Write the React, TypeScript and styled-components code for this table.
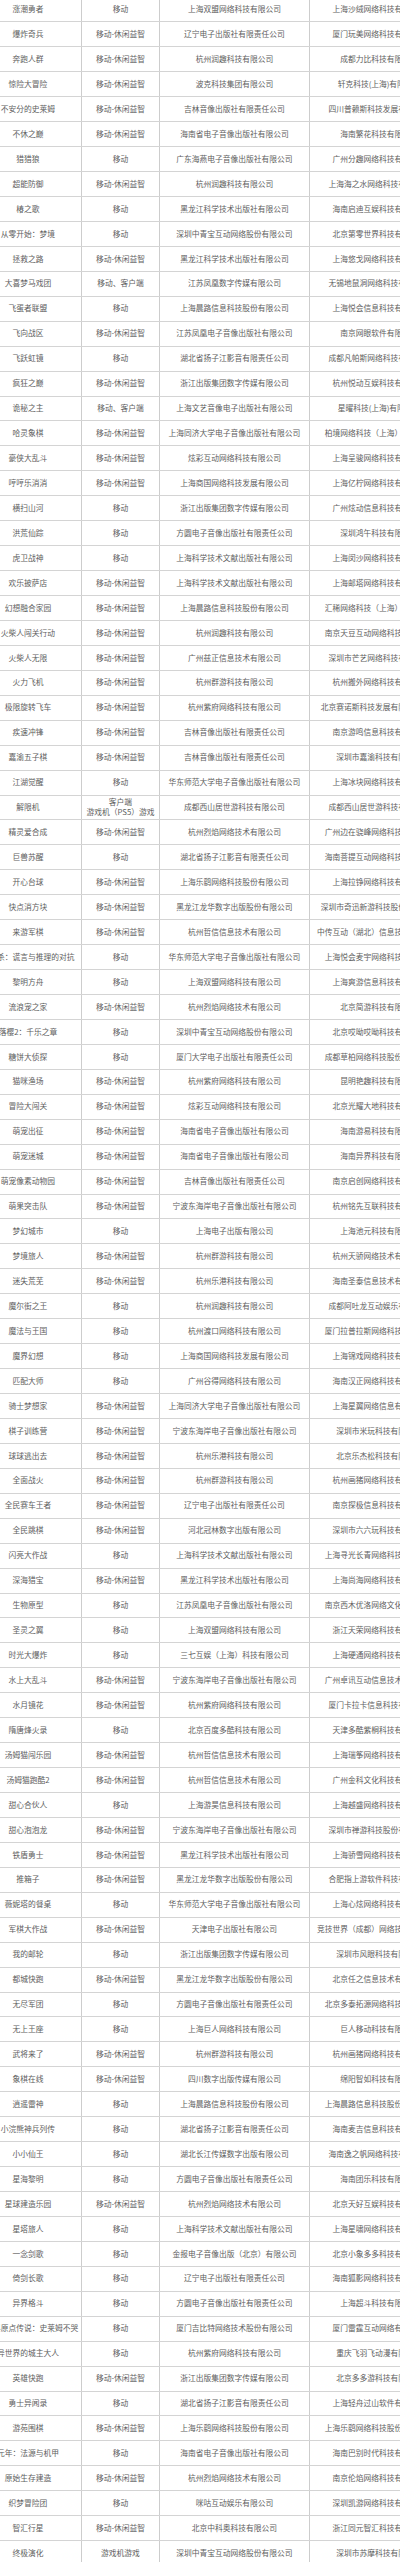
import React from "react";
import styled, { createGlobalStyle } from "styled-components";

const GlobalStyle = createGlobalStyle`
  html, body {
    margin: 0;
    padding: 0;
    background: #ffffff;
    overflow: hidden;
  }
  body {
    font-family: "Noto Sans CJK SC", "Noto Sans", sans-serif;
  }
`;

const Table = styled.div`
  margin: -2.5px 0 0 -25px;
  width: 473px;
  display: flex;
  flex-direction: column;
`;

const Row = styled.div`
  display: grid;
  grid-template-columns: 107px 78px 150px 138px;
  height: 24.95px;
  box-sizing: border-box;
  border-bottom: 1px solid #d4d4d4;
`;

const Cell = styled.div<{ $last?: boolean }>`
  display: flex;
  align-items: center;
  justify-content: center;
  text-align: center;
  box-sizing: border-box;
  border-right: ${(p) => (p.$last ? "none" : "1px solid #cdcdcd")};
  font-size: 7.75px;
  line-height: 1.38;
  color: #5e5e5e;
  white-space: pre;
  overflow: visible;
`;

type Entry = [string, string, string, string];

const data: Entry[] = [
  ["涨潮勇者", "移动", "上海双盟网络科技有限公司", "上海沙绒网络科技有限公司"],
  ["爆炸奇兵", "移动-休闲益智", "辽宁电子出版社有限责任公司", "厦门玩美网络科技有限公司"],
  ["奔跑人群", "移动-休闲益智", "杭州润趣科技有限公司", "成都力比科技有限公司"],
  ["惊险大冒险", "移动-休闲益智", "波克科技集团有限公司", "轩克科技(上海)有限公司"],
  ["不安分的史莱姆", "移动-休闲益智", "吉林音像出版社有限责任公司", "四川普赖斯科技发展有限公司"],
  ["不休之巅", "移动-休闲益智", "海南省电子音像出版社有限公司", "海南繁花科技有限公司"],
  ["猎猎狼", "移动", "广东海燕电子音像出版社有限公司", "广州分趣网络科技有限公司"],
  ["超能防御", "移动-休闲益智", "杭州润趣科技有限公司", "上海海之水网络科技有限公司"],
  ["椿之歌", "移动", "黑龙江科学技术出版社有限公司", "海南启迪互娱科技有限公司"],
  ["从零开始：梦境", "移动", "深圳中青宝互动网络股份有限公司", "北京第零世界科技有限公司"],
  ["拯救之路", "移动-休闲益智", "黑龙江科学技术出版社有限公司", "上海悠戈网络科技有限公司"],
  ["大喜梦马戏团", "移动、客户端", "江苏凤凰数字传媒有限公司", "无锡地鼠洞网络科技有限公司"],
  ["飞蛋者联盟", "移动", "上海晨路信息科技股份有限公司", "上海悦会信息科技有限公司"],
  ["飞向战区", "移动-休闲益智", "江苏凤凰电子音像出版社有限公司", "南京网眼软件有限公司"],
  ["飞跃虹镜", "移动", "湖北省扬子江影音有限责任公司", "成都凡帕斯网络科技有限公司"],
  ["疯狂之巅", "移动-休闲益智", "浙江出版集团数字传媒有限公司", "杭州悦动互娱科技有限公司"],
  ["诡秘之主", "移动、客户端", "上海文艺音像电子出版社有限公司", "星曜科技(上海)有限公司"],
  ["哈灵象棋", "移动-休闲益智", "上海同济大学电子音像出版社有限公司", "柏境网络科技（上海）有限公司"],
  ["豪侠大乱斗", "移动-休闲益智", "炫彩互动网络科技有限公司", "上海呈骏网络科技有限公司"],
  ["哼哼乐消消", "移动-休闲益智", "上海商国网络科技发展有限公司", "上海亿柠网络科技有限公司"],
  ["横扫山河", "移动", "浙江出版集团数字传媒有限公司", "广州炫动信息科技有限公司"],
  ["洪荒仙踪", "移动", "方圆电子音像出版社有限责任公司", "深圳鸿午科技有限公司"],
  ["虎卫战神", "移动", "上海科学技术文献出版社有限公司", "上海闵沙网络科技有限公司"],
  ["欢乐披萨店", "移动-休闲益智", "上海科学技术文献出版社有限公司", "上海邮塔网络科技有限公司"],
  ["幻想融合家园", "移动-休闲益智", "上海晨路信息科技股份有限公司", "汇稀网络科技（上海）有限公司"],
  ["火柴人闯关行动", "移动-休闲益智", "杭州润趣科技有限公司", "南京天豆互动网络科技有限公司"],
  ["火柴人无限", "移动-休闲益智", "广州兹正信息技术有限公司", "深圳市芒艺网络科技有限公司"],
  ["火力飞机", "移动-休闲益智", "杭州群游科技有限公司", "杭州搬外网络科技有限公司"],
  ["极限旋转飞车", "移动-休闲益智", "杭州紫府网络科技有限公司", "北京赛诺斯科技发展有限责任公司"],
  ["疾速冲锋", "移动-休闲益智", "吉林音像出版社有限责任公司", "南京游鸣信息科技有限公司"],
  ["嘉渝五子棋", "移动-休闲益智", "吉林音像出版社有限责任公司", "深圳市嘉渝科技有限公司"],
  ["江湖觉醒", "移动", "华东师范大学电子音像出版社有限公司", "上海冰块网络科技有限公司"],
  ["解限机", "客户端\n游戏机（PS5）游戏", "成都西山居世游科技有限公司", "成都西山居世游科技有限公司"],
  ["精灵爱合成", "移动-休闲益智", "杭州烈焰网络技术有限公司", "广州边在骁峰网络科技有限公司"],
  ["巨兽苏醒", "移动", "湖北省扬子江影音有限责任公司", "海南菩提互动网络科技有限公司"],
  ["开心台球", "移动-休闲益智", "上海乐鹞网络科技股份有限公司", "上海拉铮网络科技有限公司"],
  ["快点消方块", "移动-休闲益智", "黑龙江龙华数字出版股份有限公司", "深圳市奇迅新游科技股份有限公司"],
  ["来游军棋", "移动-休闲益智", "杭州哲信信息技术有限公司", "中传互动（湖北）信息技术有限公司"],
  ["狼人杀：谎言与推理的对抗", "移动", "华东师范大学电子音像出版社有限公司", "上海悦会麦宇网络科技有限公司"],
  ["黎明方舟", "移动", "上海双盟网络科技有限公司", "上海爽游信息科技有限公司"],
  ["流浪宠之家", "移动-休闲益智", "杭州烈焰网络技术有限公司", "北京简游科技有限公司"],
  ["落樱2：千乐之章", "移动", "深圳中青宝互动网络股份有限公司", "北京哎呦哎呦科技有限公司"],
  ["糖饼大侦探", "移动", "厦门大学电子出版社有限责任公司", "成都草柏网络科技股份有限公司"],
  ["猫咪渔场", "移动-休闲益智", "杭州紫府网络科技有限公司", "昆明艳趣科技有限公司"],
  ["冒险大闯关", "移动-休闲益智", "炫彩互动网络科技有限公司", "北京光耀大地科技有限公司"],
  ["萌宠出征", "移动-休闲益智", "海南省电子音像出版社有限公司", "海南游易科技有限公司"],
  ["萌宠迷城", "移动-休闲益智", "海南省电子音像出版社有限公司", "海南异界科技有限公司"],
  ["萌宠像素动物园", "移动-休闲益智", "吉林音像出版社有限责任公司", "南京启创网络科技有限公司"],
  ["萌果突击队", "移动-休闲益智", "宁波东海岸电子音像出版社有限公司", "杭州铭先互联科技有限公司"],
  ["梦幻城市", "移动", "上海电子出版有限公司", "上海池元科技有限公司"],
  ["梦境旅人", "移动-休闲益智", "杭州群游科技有限公司", "杭州天骄网络技术有限公司"],
  ["迷失荒芜", "移动-休闲益智", "杭州乐港科技有限公司", "海南圣泰信息技术有限公司"],
  ["魔尔街之王", "移动", "杭州润趣科技有限公司", "成都阿吐龙互动娱乐有限公司"],
  ["魔法与王国", "移动", "杭州渡口网络科技有限公司", "厦门拉普拉斯网络科技有限公司"],
  ["魔界幻想", "移动", "上海商国网络科技发展有限公司", "上海锦戏网络科技有限公司"],
  ["匹配大师", "移动", "广州谷得网络科技有限公司", "海南汉正网络科技有限公司"],
  ["骑士梦想家", "移动-休闲益智", "上海同济大学电子音像出版社有限公司", "上海星翼网络信息有限公司"],
  ["棋子训练营", "移动-休闲益智", "宁波东海岸电子音像出版社有限公司", "深圳市米玩科技有限公司"],
  ["球球逃出去", "移动-休闲益智", "杭州乐港科技有限公司", "北京乐杰松科技有限公司"],
  ["全面战火", "移动-休闲益智", "杭州群游科技有限公司", "杭州画猪网络科技有限公司"],
  ["全民赛车王者", "移动-休闲益智", "辽宁电子出版社有限责任公司", "南京探极信息科技有限公司"],
  ["全民跳棋", "移动-休闲益智", "河北冠林数字出版有限公司", "深圳市六六玩科技有限公司"],
  ["闪亮大作战", "移动", "上海科学技术文献出版社有限公司", "上海寻光长青网络科技有限公司"],
  ["深海猎宝", "移动-休闲益智", "黑龙江科学技术出版社有限公司", "上海尚海网络科技有限公司"],
  ["生物原型", "移动", "江苏凤凰电子音像出版社有限公司", "南京西木优洛网络文化有限公司"],
  ["圣灵之翼", "移动", "上海双盟网络科技有限公司", "浙江天荣网络科技有限公司"],
  ["时光大爆炸", "移动", "三七互娱（上海）科技有限公司", "上海硬通网络科技有限公司"],
  ["水上大乱斗", "移动-休闲益智", "宁波东海岸电子音像出版社有限公司", "广州卓讯互动信息技术有限公司"],
  ["水月镜花", "移动-休闲益智", "杭州紫府网络科技有限公司", "厦门卡拉卡信息科技有限公司"],
  ["隋唐烽火录", "移动", "北京百度多酷科技有限公司", "天津多酷紫桐科技有限公司"],
  ["汤姆猫闯乐园", "移动-休闲益智", "杭州哲信信息技术有限公司", "上海瑞筝网络科技有限公司"],
  ["汤姆猫跑酷2", "移动-休闲益智", "杭州哲信信息技术有限公司", "广州金科文化科技有限公司"],
  ["甜心合伙人", "移动", "上海游昊信息科技有限公司", "上海越盛网络科技有限公司"],
  ["甜心泡泡龙", "移动-休闲益智", "宁波东海岸电子音像出版社有限公司", "深圳市禅游科技股份有限公司"],
  ["铁盾勇士", "移动-休闲益智", "黑龙江科学技术出版社有限公司", "上海骄雪网络科技有限公司"],
  ["推箱子", "移动-休闲益智", "黑龙江龙华数字出版股份有限公司", "合肥指上游软件科技有限公司"],
  ["薇妮塔的餐桌", "移动", "华东师范大学电子音像出版社有限公司", "上海心炫网络科技有限公司"],
  ["军棋大作战", "移动-休闲益智", "天津电子出版社有限公司", "竞技世界（成都）网络技术有限公司"],
  ["我的邮轮", "移动", "浙江出版集团数字传媒有限公司", "深圳市风眼科技有限公司"],
  ["都城快跑", "移动-休闲益智", "黑龙江龙华数字出版股份有限公司", "北京任之信息技术有限公司"],
  ["无尽军团", "移动", "方圆电子音像出版社有限责任公司", "北京多泰拓源网络科技有限公司"],
  ["无上王座", "移动", "上海巨人网络科技有限公司", "巨人移动科技有限公司"],
  ["武将来了", "移动-休闲益智", "杭州群游科技有限公司", "杭州画猪网络科技有限公司"],
  ["象棋在线", "移动-休闲益智", "四川数字出版传媒有限公司", "绵阳智如科技有限公司"],
  ["逍遥雷神", "移动", "上海晨路信息科技股份有限公司", "上海晨路信息科技股份有限公司"],
  ["小浣熊神兵列传", "移动", "湖北省扬子江影音有限责任公司", "海南麦吉信息科技有限公司"],
  ["小小仙王", "移动", "湖北长江传媒数字出版有限公司", "海南逸之帆网络科技有限公司"],
  ["星海黎明", "移动", "方圆电子音像出版社有限责任公司", "海南团乐科技有限公司"],
  ["星球建造乐园", "移动-休闲益智", "杭州烈焰网络技术有限公司", "北京天好互娱科技有限公司"],
  ["星塔旅人", "移动", "上海科学技术文献出版社有限公司", "上海星啸网络科技有限公司"],
  ["一念剑歌", "移动", "金报电子音像出版（北京）有限公司", "北京小象多多科技有限公司"],
  ["倚剑长歌", "移动", "辽宁电子出版社有限责任公司", "海南狐影网络科技有限公司"],
  ["异界格斗", "移动", "方圆电子音像出版社有限责任公司", "上海超斗科技有限公司"],
  ["异世界原点传说：史莱姆不哭", "移动", "厦门吉比特网络技术股份有限公司", "厦门雷霆互动网络有限公司"],
  ["异世界的城主大人", "移动", "杭州紫府网络科技有限公司", "重庆飞羽飞动漫有限公司"],
  ["英雄快跑", "移动-休闲益智", "浙江出版集团数字传媒有限公司", "北京多多游科技有限公司"],
  ["勇士异闻录", "移动", "湖北省扬子江影音有限责任公司", "上海轻舟过山软件有限公司"],
  ["游苑围棋", "移动-休闲益智", "上海乐鹞网络科技股份有限公司", "上海乐鹞网络科技股份有限公司"],
  ["元年：法源与机甲", "移动", "海南省电子音像出版社有限公司", "海南巴别时代科技有限公司"],
  ["原始生存建造", "移动-休闲益智", "杭州烈焰网络技术有限公司", "南京伦焰网络科技有限公司"],
  ["织梦冒险团", "移动", "咪咕互动娱乐有限公司", "深圳凯游网络科技有限公司"],
  ["智汇行星", "移动-休闲益智", "北京中科奥科技有限公司", "浙江同元智汇科技有限公司"],
  ["终极演化", "游戏机游戏", "深圳中青宝互动网络股份有限公司", "深圳市苏摩科技有限公司"],
];

export default function App() {
  return (
    <>
      <GlobalStyle />
      <Table>
        {data.map((r, i) => (
          <Row key={i}>
            <Cell>{r[0]}</Cell>
            <Cell>{r[1]}</Cell>
            <Cell>{r[2]}</Cell>
            <Cell $last>{r[3]}</Cell>
          </Row>
        ))}
      </Table>
    </>
  );
}
